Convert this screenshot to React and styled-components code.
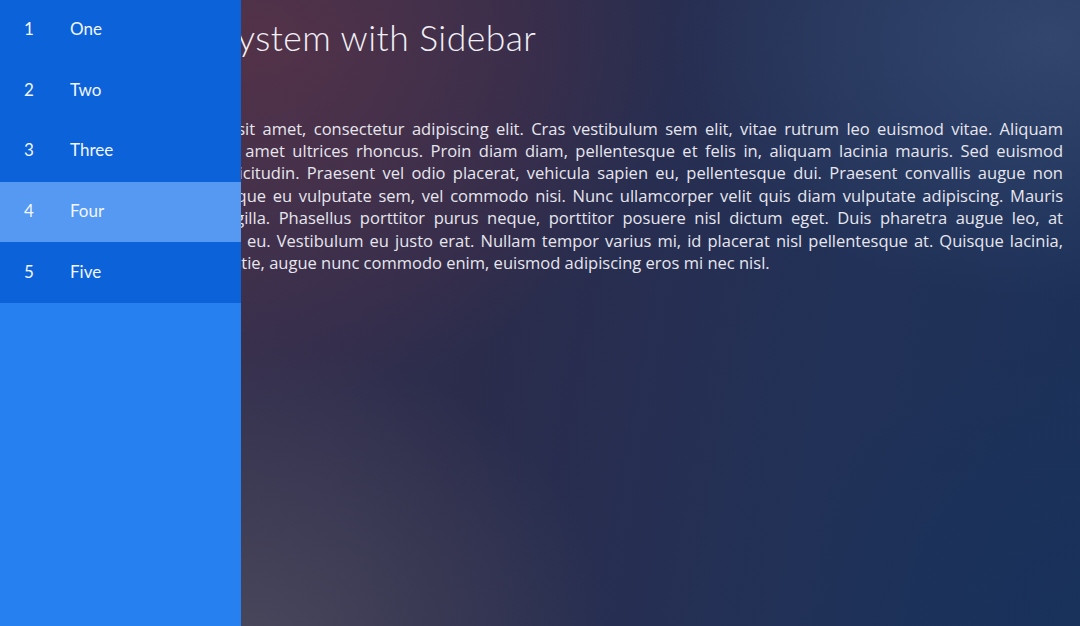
import React from "react";
import styled, { createGlobalStyle } from "styled-components";

const Global = createGlobalStyle`
  html, body { margin: 0; padding: 0; height: 100%; }
  body {
    font-family: "Open Sans", "Noto Sans", sans-serif;
    overflow: hidden;
    background: #2a3354;
  }
  #root { min-height: 100vh; }
`;

const Page = styled.div`
  position: relative;
  width: 100vw;
  height: 100vh;
  overflow: hidden;
  background:
    radial-gradient(ellipse 420px 360px at 260px 40px, rgba(84, 50, 72, 0.95), rgba(84, 50, 72, 0) 100%),
    radial-gradient(ellipse 360px 300px at 250px 640px, rgba(74, 72, 92, 0.95), rgba(74, 72, 92, 0) 100%),
    radial-gradient(ellipse 380px 260px at 1050px 40px, rgba(52, 72, 112, 0.9), rgba(52, 72, 112, 0) 100%),
    radial-gradient(ellipse 300px 300px at 1080px 626px, rgba(24, 50, 92, 0.9), rgba(24, 50, 92, 0) 100%),
    linear-gradient(100deg, #3f3450 0%, #2b2c4c 45%, #223157 75%, #1c3158 100%);
`;

const Main = styled.main`
  padding: 17px 17px 0 77px;
  color: #ecebf2;
`;

const Title = styled.h1`
  margin: 0 0 58px 64px;
  font-family: Lato, "Open Sans", sans-serif;
  font-size: 35.5px;
  line-height: 1.2;
  font-weight: 300;
  color: #f1f0f6;
  letter-spacing: 0.45px;
`;

const Paragraph = styled.div`
  font-size: 16.5px;
  line-height: 22.4px;
  color: #e7e6ee;
`;

const Line = styled.span`
  display: block;
  white-space: nowrap;
  text-align: ${(p) => (p.$last ? "left" : "justify")};
  text-align-last: ${(p) => (p.$last ? "left" : "justify")};
`;

const Sidebar = styled.nav`
  position: absolute;
  left: 0;
  top: 0;
  bottom: 0;
  width: 241px;
  background: #2680ef;
  display: flex;
  flex-direction: column;
`;

const Item = styled.a`
  display: flex;
  align-items: center;
  box-sizing: border-box;
  height: 60.6px;
  padding: 0 0 3px 24px;
  background: ${(p) => (p.$active ? "#5699f2" : "#0b62d9")};
  color: #f2f6ff;
  font-family: Lato, "Open Sans", sans-serif;
  font-size: 17px;
  text-decoration: none;
  cursor: pointer;
`;

const Num = styled.span`
  width: 46px;
`;

const items = ["One", "Two", "Three", "Four", "Five"];

const lines = [
  "Lorem ipsum dolor sit amet, consectetur adipiscing elit. Cras vestibulum sem elit, vitae rutrum leo euismod vitae. Aliquam",
  "Etiam lacus nulla sit amet ultrices rhoncus. Proin diam diam, pellentesque et felis in, aliquam lacinia mauris. Sed euismod",
  "Nam sed tortor, sollicitudin. Praesent vel odio placerat, vehicula sapien eu, pellentesque dui. Praesent convallis augue non",
  "Donec vel, ligula, neque eu vulputate sem, vel commodo nisi. Nunc ullamcorper velit quis diam vulputate adipiscing. Mauris",
  "mollis et lorem fringilla. Phasellus porttitor purus neque, porttitor posuere nisl dictum eget. Duis pharetra augue leo, at",
  "tellus. Aliquet, augue eu. Vestibulum eu justo erat. Nullam tempor varius mi, id placerat nisl pellentesque at. Quisque lacinia,",
  "nunc ante quis molestie, augue nunc commodo enim, euismod adipiscing eros mi nec nisl.",
];

export default function App() {
  return (
    <>
      <Global />
      <Page>
        <Main>
          <Title>Grid System with Sidebar</Title>
          <Paragraph>
            {lines.map((l, i) => (
              <Line key={i} $last={i === lines.length - 1}>
                {l}
              </Line>
            ))}
          </Paragraph>
        </Main>
        <Sidebar>
          {items.map((label, i) => (
            <Item key={label} $active={i === 3}>
              <Num>{i + 1}</Num>
              {label}
            </Item>
          ))}
        </Sidebar>
      </Page>
    </>
  );
}
